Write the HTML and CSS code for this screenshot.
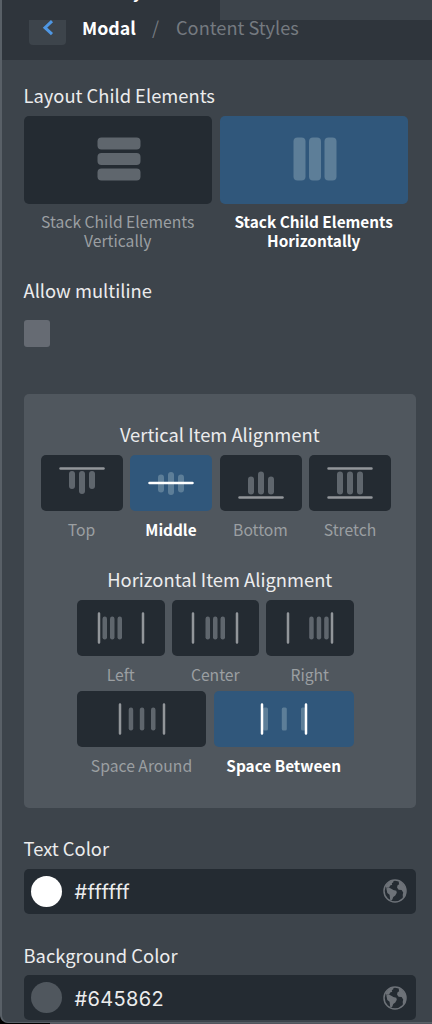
FILE: index.html
```
<!DOCTYPE html>
<html lang="en">
<head>
  <meta charset="UTF-8">
  <title>Content Styles</title>
  <meta name="viewport" content="width=device-width, initial-scale=1.0">
  <link rel="stylesheet" href="styles.css">
</head>
<body>
  <!-- Shared globe icon -->
  <svg width="0" height="0" class="defs">
    <symbol id="globe" viewBox="0 0 24 24">
      <circle cx="12" cy="12" r="11" fill="none" stroke="currentColor" stroke-width="1.5"/>
      <path fill="currentColor" d="M3 6.5 6.2 2.8 10 1.400l.6 1.500-1.800 1.400.4 1.500-2 .8L6 8.800H3z"/>
      <path fill="currentColor" d="m3.300 9.300 3-.5 2.500 1.200 1.500 1 3 .8.500 1.900-1.500 2.700-2 1.600-1.400 3.600-1.700-.5-.6-5.300-2.300-1.900z"/>
      <path fill="currentColor" d="m15.600 2 3 1.500 3.300 4.300 1 4.200-1 4.600-1.900 2.600-.3-3.200.5-2.500-1.600-2.500-3-.3-1.500-1.900.3-2.200 1.700-1.400z"/>
    </symbol>
  </svg>

  <div class="panel">
    <header>
      <div class="tabs">
        <div class="tab active"><span>y</span></div>
        <div class="tab"></div>
      </div>
      <nav class="breadcrumb">
        <button class="back">
          <svg width="12" height="18" viewBox="0 0 12 18"><path d="M10 2.200 3 8.700 10 15.200" fill="none" stroke="#4f97e3" stroke-width="3"/></svg>
        </button>
        <span class="crumb current">Modal</span>
        <span class="slash">/</span>
        <span class="crumb">Content Styles</span>
      </nav>
    </header>

    <main>
      <h2 class="title">Layout Child Elements</h2>
      <div class="options layout-options">
        <div class="option">
          <div class="tile">
            <svg width="44" height="44">
              <g class="bars"><rect x="0.500" y="0.500" width="43" height="12" rx="4"/><rect x="0.500" y="16" width="43" height="12" rx="4"/><rect x="0.500" y="31.500" width="43" height="12" rx="4"/></g>
            </svg>
          </div>
          <p>Stack Child Elements Vertically</p>
        </div>
        <div class="option selected">
          <div class="tile">
            <svg width="44" height="44">
              <g class="bars"><rect x="0.500" y="0.500" width="12" height="43" rx="4"/><rect x="16" y="0.500" width="12" height="43" rx="4"/><rect x="31.500" y="0.500" width="12" height="43" rx="4"/></g>
            </svg>
          </div>
          <p>Stack Child Elements Horizontally</p>
        </div>
      </div>

      <h2 class="title">Allow multiline</h2>
      <div class="checkbox"></div>

      <section class="group">
        <h2 class="title">Vertical Item Alignment</h2>
        <div class="options vertical-options">
          <div class="option">
            <div class="tile">
              <svg width="46" height="34">
                <g class="bars"><rect x="10" y="5" width="6" height="18" rx="3"/><rect x="20" y="5" width="6" height="23" rx="3"/><rect x="30" y="5" width="6" height="18" rx="3"/></g>
                <path class="line" d="M1.500 2.500h43"/>
              </svg>
            </div>
            <p>Top</p>
          </div>
          <div class="option selected">
            <div class="tile">
              <svg width="46" height="34">
                <g class="bars"><rect x="10" y="8.500" width="6" height="18" rx="3"/><rect x="20" y="6" width="6" height="23" rx="3"/><rect x="30" y="8.500" width="6" height="18" rx="3"/></g>
                <path class="line" d="M1.500 17h43"/>
              </svg>
            </div>
            <p>Middle</p>
          </div>
          <div class="option">
            <div class="tile">
              <svg width="46" height="34">
                <g class="bars"><rect x="10" y="10.500" width="6" height="18" rx="3"/><rect x="20" y="5.500" width="6" height="23" rx="3"/><rect x="30" y="10.500" width="6" height="18" rx="3"/></g>
                <path class="line" d="M1.500 31.500h43"/>
              </svg>
            </div>
            <p>Bottom</p>
          </div>
          <div class="option">
            <div class="tile">
              <svg width="46" height="34">
                <g class="bars"><rect x="10" y="5.500" width="6" height="23" rx="3"/><rect x="20" y="5.500" width="6" height="23" rx="3"/><rect x="30" y="5.500" width="6" height="23" rx="3"/></g>
                <path class="line" d="M1.500 2.500h43M1.500 31.500h43"/>
              </svg>
            </div>
            <p>Stretch</p>
          </div>
        </div>

        <h2 class="title">Horizontal Item Alignment</h2>
        <div class="options horizontal-options">
          <div class="option">
            <div class="tile">
              <svg width="48" height="34">
                <g class="bars"><rect x="5.500" y="5.500" width="4.500" height="23" rx="2.200"/><rect x="13" y="5.500" width="4.500" height="23" rx="2.200"/><rect x="20.500" y="5.500" width="4.500" height="23" rx="2.200"/></g>
                <path class="line" d="M2 2.500v29M46 2.500v29"/>
              </svg>
            </div>
            <p>Left</p>
          </div>
          <div class="option">
            <div class="tile">
              <svg width="48" height="34">
                <g class="bars"><rect x="14.500" y="5.500" width="4.500" height="23" rx="2.200"/><rect x="22" y="5.500" width="4.500" height="23" rx="2.200"/><rect x="29.500" y="5.500" width="4.500" height="23" rx="2.200"/></g>
                <path class="line" d="M2 2.500v29M46 2.500v29"/>
              </svg>
            </div>
            <p>Center</p>
          </div>
          <div class="option">
            <div class="tile">
              <svg width="48" height="34">
                <g class="bars"><rect x="23.200" y="5.500" width="4.500" height="23" rx="2.200"/><rect x="30.700" y="5.500" width="4.500" height="23" rx="2.200"/><rect x="38.200" y="5.500" width="4.500" height="23" rx="2.200"/></g>
                <path class="line" d="M2 2.500v29M46 2.500v29"/>
              </svg>
            </div>
            <p>Right</p>
          </div>
        </div>
        <div class="options spacing-options">
          <div class="option">
            <div class="tile">
              <svg width="48" height="34">
                <g class="bars"><rect x="10.700" y="5.500" width="4.500" height="23" rx="2.200"/><rect x="21.800" y="5.500" width="4.500" height="23" rx="2.200"/><rect x="33" y="5.500" width="4.500" height="23" rx="2.200"/></g>
                <path class="line" d="M2 2.500v29M46 2.500v29"/>
              </svg>
            </div>
            <p>Space Around</p>
          </div>
          <div class="option selected">
            <div class="tile">
              <svg width="48" height="34">
                <g class="bars"><rect x="3" y="5.500" width="5" height="23" rx="1.500"/><rect x="21.800" y="5.500" width="5" height="23" rx="1.500"/><rect x="41" y="5.500" width="5" height="23" rx="1.500"/></g>
                <path class="line" d="M2 2.500v29M46 2.500v29"/>
              </svg>
            </div>
            <p>Space Between</p>
          </div>
        </div>
      </section>

      <h2 class="title">Text Color</h2>
      <div class="color-field">
        <span class="swatch white"></span>
        <span class="value">#ffffff</span>
        <svg class="globe"><use href="#globe"/></svg>
      </div>

      <h2 class="title">Background Color</h2>
      <div class="color-field">
        <span class="swatch"></span>
        <span class="value">#645862</span>
        <svg class="globe"><use href="#globe"/></svg>
      </div>
    </main>
  </div>
</body>
</html>
```
FILE: styles.css
```
:root {
  --panel: #3d444b;
  --header: #2f353c;
  --tile: #242b32;
  --selected: #30577b;
  --group: #50575e;
  --bar: #5f666d;
  --muted: #9b9fa2;
  --text: #ececed;
}

* {
  margin: 0;
  padding: 0;
  box-sizing: border-box;
}

body {
  height: 1024px;
  overflow: hidden;
  background: linear-gradient(90deg, #000 50px, #51555d 50px);
  color: var(--text);
  font-family: "Noto Sans CJK SC", "Noto Sans", sans-serif;
}

.defs {
  position: absolute;
}

.panel {
  height: 1023px;
  overflow: hidden;
  background: var(--panel);
  border-left: 2px solid #596067;
  border-bottom: 1px solid #596067;
  border-bottom-left-radius: 8px;
}

/* Header */
header {
  height: 60px;
  background: var(--header);
}

.tabs {
  display: flex;
  height: 20px;
  overflow: hidden;
}

.tab {
  flex: 1;
  background: var(--panel);
}

.tab.active {
  flex: 0 0 218px;
  padding-left: 131px;
  background: var(--header);
  color: #fff;
  font-size: 18px;
  font-weight: 500;
  line-height: 26px;
}

.tab span {
  display: block;
  margin-top: -23px;
}

.breadcrumb {
  display: flex;
  height: 40px;
  padding-left: 27px;
  font-size: 18px;
  line-height: 16px;
  white-space: nowrap;
}

.back {
  width: 37px;
  height: 25px;
  border: none;
  border-radius: 0 0 4px 4px;
  background: var(--panel);
  overflow: hidden;
}

.back svg {
  display: block;
  margin: -1px auto 8px;
}

.crumb {
  margin-top: -1px;
  color: #757a80;
  font-size: 18.200px;
}

.crumb.current {
  width: 54px;
  margin-left: 16px;
  color: #fff;
  font-size: 17.800px;
  font-weight: 700;
}

.slash {
  width: 8px;
  margin: -1px 16px 0;
  color: #757a80;
}

/* Settings */
main {
  padding: 22px 16px 0 21.500px;
}

.title {
  height: 26px;
  font-size: 18.350px;
  font-weight: 400;
  line-height: 26px;
  white-space: nowrap;
}

.options {
  display: flex;
  gap: 7.500px;
}

.option p {
  color: var(--muted);
  font-size: 15.700px;
  line-height: 19px;
  text-align: center;
}

.tile {
  display: flex;
  align-items: center;
  justify-content: center;
  height: 56px;
  border-radius: 5px;
  background: var(--tile);
}

.bars {
  fill: var(--bar);
}

.line {
  fill: none;
  stroke: #92969a;
  stroke-width: 2.500;
  stroke-linecap: round;
}

.selected .tile {
  background: var(--selected);
}

.selected .bars {
  fill: #5d7e98;
}

.selected .line {
  stroke: #fff;
}

.option.selected p {
  color: #fff;
  font-size: 15.350px;
  font-weight: 700;
}

.layout-options {
  height: 169px;
  padding-top: 7.500px;
}

.layout-options .option {
  width: 188.500px;
}

.layout-options .tile {
  height: 88px;
  margin-bottom: 8.500px;
  padding: 0 0 1px 1.500px;
}

.layout-options p {
  padding: 0 8px;
}

.checkbox {
  width: 26.500px;
  height: 27px;
  margin-top: 17px;
  border-radius: 3px;
  background: #666b73;
}

/* Alignment group */
.group {
  height: 414px;
  margin: 46.500px 0 27.500px;
  padding: 27.500px 17px 0;
  border-radius: 5px;
  background: var(--group);
}

.group .title {
  text-align: center;
}

.group .options {
  padding-top: 8px;
}

.group p {
  margin-top: 9px;
  white-space: nowrap;
}

.vertical-options {
  height: 119px;
}

.vertical-options .option {
  width: 82px;
}

.horizontal-options,
.spacing-options {
  height: 90.500px;
  padding-left: 36.500px;
}

.horizontal-options .option {
  width: 87.500px;
}

.horizontal-options .option:nth-child(2) {
  width: 86.500px;
}

.spacing-options .option {
  width: 129px;
}

.spacing-options .option.selected {
  width: 140.500px;
}

/* Color inputs */
.color-field {
  display: flex;
  align-items: center;
  height: 45px;
  margin: 7.500px 0 28px;
  padding: 0 9px 0 7px;
  border-radius: 5px;
  background: var(--tile);
}

.swatch {
  width: 31px;
  height: 31px;
  border-radius: 50%;
  background: var(--group);
}

.swatch.white {
  background: #fff;
}

.value {
  flex: 1;
  margin-left: 13px;
  padding-top: 2px;
  font-family: Inter, sans-serif;
  font-size: 20px;
  letter-spacing: 0.35px;
}

.globe {
  width: 24px;
  height: 24px;
  color: #6d7278;
}
```
